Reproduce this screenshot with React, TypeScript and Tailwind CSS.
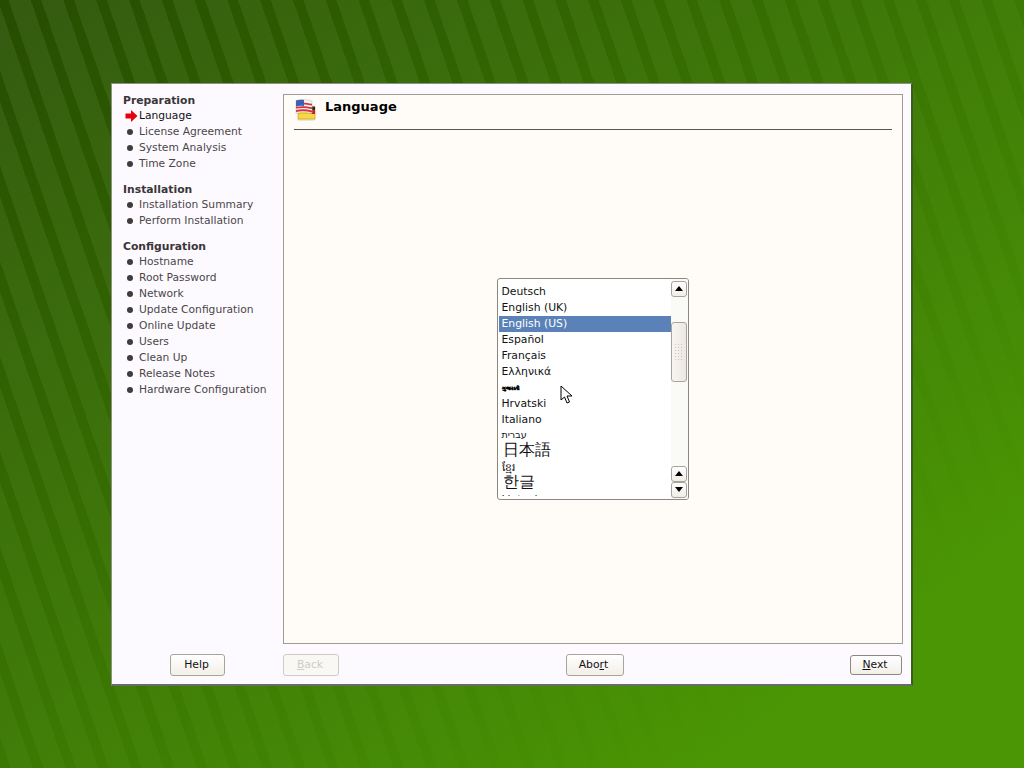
const font = { fontFamily: '"DejaVu Sans", sans-serif' };

const steps = [
  {
    title: 'Preparation',
    items: ['Language', 'License Agreement', 'System Analysis', 'Time Zone'],
  },
  {
    title: 'Installation',
    items: ['Installation Summary', 'Perform Installation'],
  },
  {
    title: 'Configuration',
    items: [
      'Hostname',
      'Root Password',
      'Network',
      'Update Configuration',
      'Online Update',
      'Users',
      'Clean Up',
      'Release Notes',
      'Hardware Configuration',
    ],
  },
];

const languages = [
  { label: 'Deutsch' },
  { label: 'English (UK)' },
  { label: 'English (US)', selected: true },
  { label: 'Español' },
  { label: 'Français' },
  { label: 'Ελληνικά' },
  { label: 'ગુજરાતી', tiny: true },
  { label: 'Hrvatski' },
  { label: 'Italiano' },
  { label: 'עברית', hebrew: true },
  { label: '日本語', big: true },
  { label: 'ខ្មែរ' },
  { label: '한글', big: true },
  { label: 'Lietuvių' },
];

function RedArrow() {
  return (
    <svg width="13" height="14" viewBox="0 0 13 14" className="shrink-0">
      <path d="M0.5 4.5 H6 V1 L12.5 7 L6 13 V9.5 H0.5 Z" fill="#e8000b" />
    </svg>
  );
}

function FlagIcon() {
  return (
    <svg width="22" height="22" viewBox="0 0 22 22" className="shrink-0">
      <ellipse cx="11" cy="20.8" rx="10" ry="1.2" fill="#e8e4de" />
      <path d="M3 8 L20 8 V20 H3 Z" fill="#f5c400" stroke="#b98f10" strokeWidth="0.6" />
      <rect x="3.5" y="15" width="16" height="4.5" fill="#f8d840" />
      <rect x="15" y="7.5" width="5" height="4" fill="#2a2a2a" />
      <rect x="15" y="11.5" width="5" height="3.5" fill="#cc1c1c" />
      <path d="M1 1.5 C5 0 12 0.5 17 2 V14.5 C12 13 5 13 1 14.5 Z" fill="#f6f6f6" stroke="#b8b8b8" strokeWidth="0.5" />
      <path d="M1 4.4 C6 3.2 12 3.8 17 4.8 V6.6 C12 5.6 6 5 1 6.2 Z" fill="#d8323c" />
      <path d="M1 7.8 C6 6.6 12 7.2 17 8.2 V10 C12 9 6 8.4 1 9.6 Z" fill="#d8323c" />
      <path d="M1 11 C6 9.8 12 10.4 17 11.4 V13.4 C12 12.2 6 11.8 1 13 Z" fill="#d8323c" />
      <path d="M1 1.5 C3 0.8 6 0.6 9 1 V7 C6 6.6 3 6.8 1 7.6 Z" fill="#3c62b4" />
    </svg>
  );
}

function Cursor() {
  return (
    <svg width="13" height="20" viewBox="0 0 13 20">
      <path
        d="M1 1 V15 L4.5 12 L7 18 L9.5 17 L7 11 H12 Z"
        fill="#fff"
        stroke="#000"
        strokeWidth="1"
        strokeLinejoin="round"
      />
    </svg>
  );
}

function WizardButton({
  width,
  disabled,
  isDefault,
  children,
}: {
  width: string;
  disabled?: boolean;
  isDefault?: boolean;
  children: React.ReactNode;
}) {
  return (
    <button
      disabled={disabled}
      className={`${width} ${isDefault ? 'my-px mr-px h-5 border-[#8c8880]' : 'h-[22px] border-[#a8a49c]'} ${
        disabled
          ? 'border-[#cfccc6] bg-[#faf8f5] text-[#cfccc6]'
          : 'bg-gradient-to-b from-white to-[#f3efe9] text-[#111]'
      } flex items-center justify-center rounded-[3px] border pr-0.5 text-[10.8px]`}
    >
      {children}
    </button>
  );
}

function ScrollButton({ up }: { up?: boolean }) {
  return (
    <div className="flex h-4 w-4 items-center justify-center rounded-[3px] border border-[#a8a49c] bg-gradient-to-b from-white to-[#f1ede6]">
      <svg width="8" height="5" viewBox="0 0 8 5">
        <path d={up ? 'M4 0 L8 5 H0 Z' : 'M0 0 H8 L4 5 Z'} fill="#000" />
      </svg>
    </div>
  );
}

function LanguageList() {
  return (
    <div className="flex h-[222px] w-[192px] overflow-hidden rounded-[3px] border border-[#8c8880] bg-white">
      <div className="h-[217px] w-[173px] overflow-hidden pt-[5px] pl-px">
        {languages.map((l) => (
          <div
            key={l.label}
            className={`flex h-4 items-center pt-0.5 pl-[3px] whitespace-nowrap ${
              l.big ? 'text-[16px]' : 'text-[10.8px]'
            } ${l.selected ? 'bg-[#5b82b8] text-white' : 'text-[#111]'}`}
          >
            {l.big ? (
              <span className="ml-px -translate-y-[3px]">{l.label}</span>
            ) : l.tiny ? (
              <span className="text-[5px] font-bold text-black [-webkit-text-stroke:0.5px_black]">{l.label}</span>
            ) : l.hebrew ? (
              <span className="-translate-y-px text-[9.5px]">{l.label}</span>
            ) : (
              l.label
            )}
          </div>
        ))}
      </div>
      <div className="flex w-[17px] flex-col bg-[#fafaf6] pt-0.5 pb-px">
        <ScrollButton up />
        <div className="mt-[25px] flex h-[60px] w-4 items-center justify-center rounded-[3px] border border-[#a8a49c] bg-gradient-to-r from-[#f8f5f0] to-[#ece8e0]">
          <div className="h-[18px] w-2.5 bg-[radial-gradient(#c8c4bc_1px,transparent_1px)] bg-[length:3px_3px]" />
        </div>
        <div className="mt-auto flex flex-col">
          <ScrollButton up />
          <ScrollButton />
        </div>
      </div>
    </div>
  );
}

export default function App() {
  return (
    <div
      style={font}
      className="relative h-[768px] w-[1024px] overflow-hidden bg-[linear-gradient(to_bottom_right,transparent_0%,#4a9604_85%),repeating-linear-gradient(71deg,#264c00_0px,#264c00_10px,#345a10_10px,#345a10_31px)] pt-[83px] pl-[111px]"
    >
      <div className="flex h-[603px] w-[802px] border-t border-r-2 border-b-2 border-l border-t-[#8f8f88] border-r-[#3c5c20] border-b-[#6a6a70] border-l-[#8f8f88] bg-[#fdfaff]">
        <aside className="flex w-[171px] shrink-0 flex-col pt-2.5">
          {steps.map((group, gi) => (
            <div key={group.title} className={gi === 0 ? '' : 'mt-[11px]'}>
              <div className="flex h-[14px] items-center pl-[11px] text-[10.8px] font-bold text-[#3a3638]">
                {group.title}
              </div>
              {group.items.map((item) => (
                <div key={item} className="flex h-4 items-center">
                  <div className="flex w-[27px] shrink-0 justify-end pr-[5px]">
                    {item === 'Language' ? (
                      <div className="-mr-[5px] pr-px">
                        <RedArrow />
                      </div>
                    ) : (
                      <span className="mr-[1px] size-1.5 rounded-full bg-[#3f3c3e]" />
                    )}
                  </div>
                  <span
                    className={`text-[10.7px] whitespace-nowrap ${
                      item === 'Language' ? 'text-[#111]' : 'text-[#4a4648]'
                    }`}
                  >
                    {item}
                  </span>
                </div>
              ))}
            </div>
          ))}
          <div className="mt-auto mb-2 flex pl-[58px]">
            <WizardButton width="w-[55px]">Help</WizardButton>
          </div>
        </aside>

        <main className="flex w-[620px] flex-col pt-2.5">
          <section className="flex h-[550px] flex-col border border-[#a09c94] bg-[#fffcf7] px-2.5">
            <div className="flex h-[35px] items-start border-b border-[#555] pt-1 pl-[1px]">
              <FlagIcon />
              <h1 className="ml-2 text-[13px] leading-[15px] font-bold text-black">Language</h1>
            </div>
            <div className="flex flex-1 items-center justify-center">
              <div className="mt-[4px] -ml-px">
                <LanguageList />
              </div>
            </div>
          </section>
          <div className="mt-2.5 flex items-start justify-between">
            <WizardButton width="w-14" disabled>
              <span>
                <span className="underline">B</span>ack
              </span>
            </WizardButton>
            <WizardButton width="w-[58px]">
              <span>
                Abo<span className="underline">r</span>t
              </span>
            </WizardButton>
            <WizardButton width="w-[52px]" isDefault>
              <span>
                <span className="underline">N</span>ext
              </span>
            </WizardButton>
          </div>
        </main>
      </div>

      <div className="absolute top-[385px] left-[560px]">
        <Cursor />
      </div>
    </div>
  );
}
